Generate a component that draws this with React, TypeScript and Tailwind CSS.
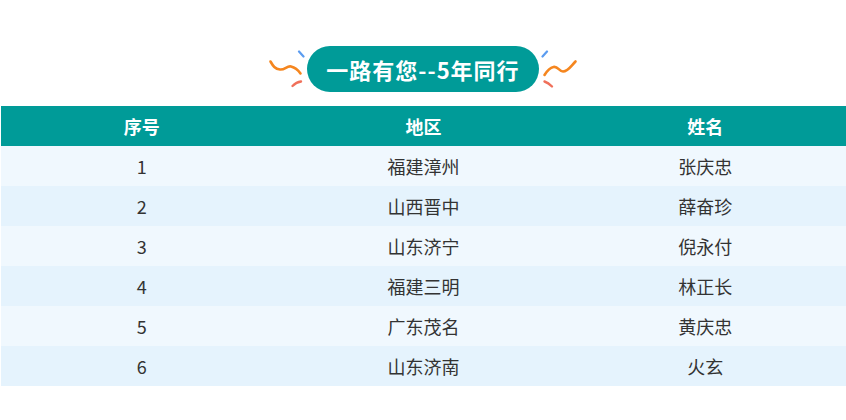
import React from "react";

interface Row {
  no: number;
  region: string;
  name: string;
}

const rows: Row[] = [
  { no: 1, region: "福建漳州", name: "张庆忠" },
  { no: 2, region: "山西晋中", name: "薛奋珍" },
  { no: 3, region: "山东济宁", name: "倪永付" },
  { no: 4, region: "福建三明", name: "林正长" },
  { no: 5, region: "广东茂名", name: "黄庆忠" },
  { no: 6, region: "山东济南", name: "火玄" },
];

const LeftConfetti = () => (
  <svg width="38" height="46" viewBox="268 46 38 46" fill="none" strokeLinecap="round">
    <path d="M300 51.5 L304.5 56.5" stroke="#5b9cf0" strokeWidth="2.2" />
    <path
      d="M271.5 61.5 C274 66 276 69 281 69.5 C286 70 288 65.5 292 66.5 C296 67.5 299 70 301.5 73.5"
      stroke="#f5861f"
      strokeWidth="2.6"
    />
    <path d="M293.5 86 C296 83.5 298.5 82 302 81.5" stroke="#f0705a" strokeWidth="2.4" />
  </svg>
);

const RightConfetti = () => (
  <svg width="38" height="46" viewBox="542 46 38 46" fill="none" strokeLinecap="round">
    <path d="M543.5 56.5 L548 51.5" stroke="#5b9cf0" strokeWidth="2.2" />
    <path
      d="M545.5 75 C548 71 550 68 554.5 67 C559 66 560 71.5 564 71.5 C569 71.5 572 66 576.5 61.5"
      stroke="#f5861f"
      strokeWidth="2.6"
    />
    <path d="M545.5 81.5 C548.5 82.5 551 84.5 553 86.5" stroke="#f0705a" strokeWidth="2.4" />
  </svg>
);

export default function App() {
  return (
    <div
      className="w-[846px] h-[420px] bg-white text-[#333333]"
      style={{ fontFamily: '"Noto Sans CJK SC", "Noto Sans", sans-serif' }}
    >
      <div className="flex justify-center items-center gap-[2px] pt-[46px]">
        <LeftConfetti />
        <div className="w-[232px] h-[46px] rounded-full bg-[#009b98] flex items-center justify-center text-white text-[22px] font-bold tracking-[1px]">
          一路有您--5年同行
        </div>
        <RightConfetti />
      </div>

      <div className="mt-[14px] ml-[1px]">
        <div className="grid grid-cols-3 h-[40px] bg-[#009b98] text-white text-[18px] font-bold">
          <div className="flex items-center justify-center">序号</div>
          <div className="flex items-center justify-center">地区</div>
          <div className="flex items-center justify-center">姓名</div>
        </div>
        {rows.map((r, i) => (
          <div
            key={r.no}
            className={`grid grid-cols-3 h-[40px] text-[18px] ${i % 2 === 0 ? "bg-[#f0f8fe]" : "bg-[#e5f3fd]"}`}
          >
            <div className="flex items-center justify-center">{r.no}</div>
            <div className="flex items-center justify-center">{r.region}</div>
            <div className="flex items-center justify-center">{r.name}</div>
          </div>
        ))}
      </div>
    </div>
  );
}
